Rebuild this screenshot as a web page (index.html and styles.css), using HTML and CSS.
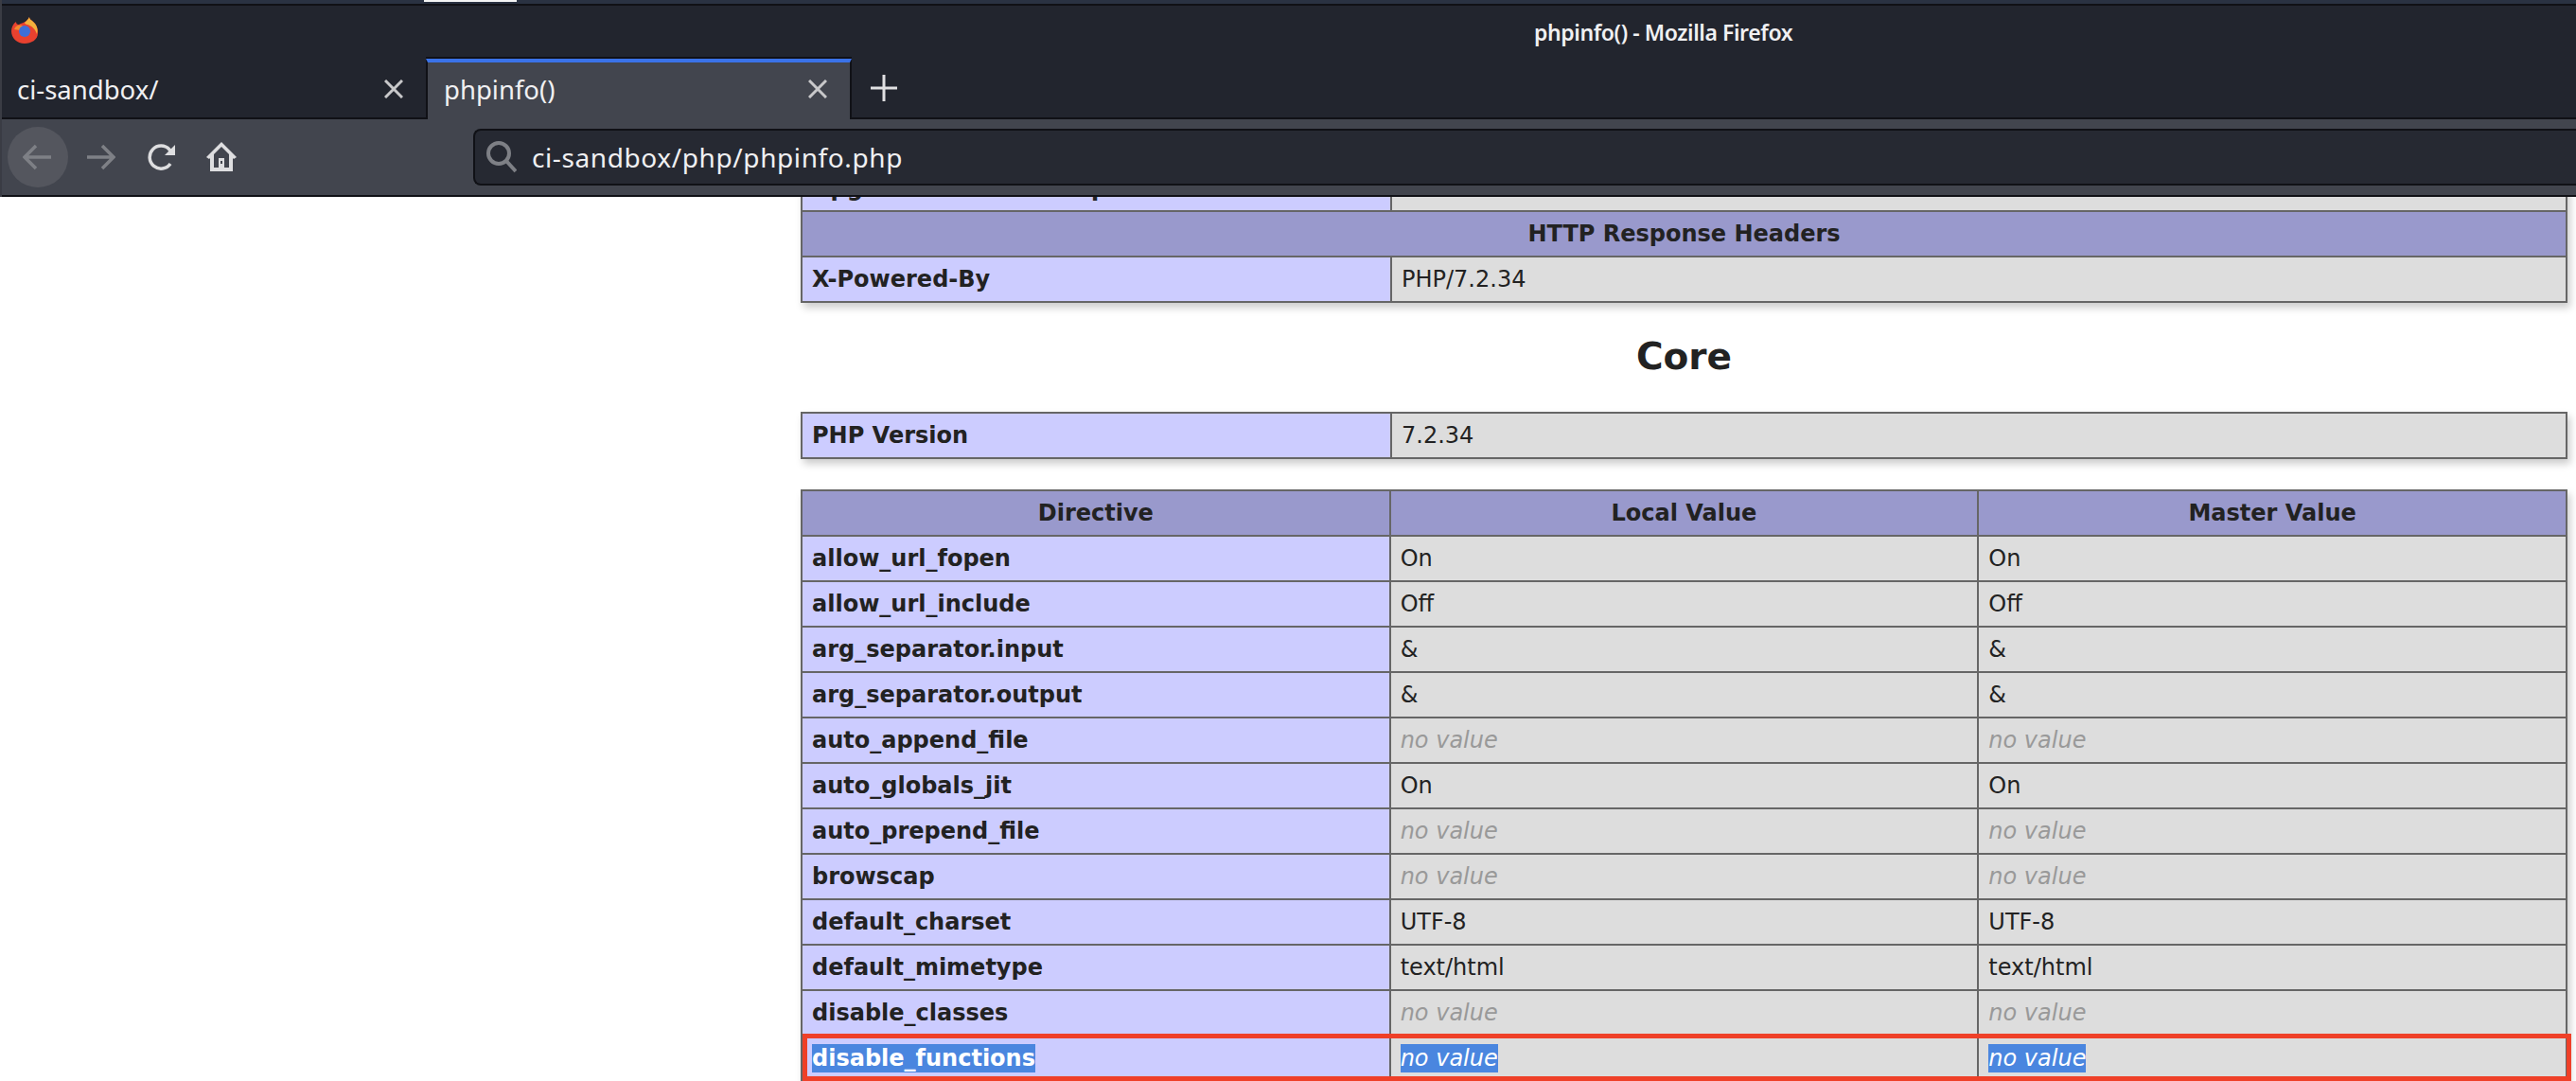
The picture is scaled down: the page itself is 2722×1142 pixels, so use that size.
FILE: index.html
```html
<!DOCTYPE html>
<html>

<head>
    <meta charset="utf-8">
    <title>phpinfo() - Mozilla Firefox</title>
    <link rel="stylesheet" href="styles.css">
</head>

<body>
    <header class="chrome">
        <div class="strip"><span class="strip-mark"></span></div>

        <div class="titlebar">
            <svg class="logo" viewBox="0 0 28 28">
                <path d="M19 0 C19 3 22 3 25 7 C28 11 28 15 28 17 C28 24 21 28 14 28 C6 28 0 22 0 15 C0 11 2 7 5 5 C5 7 6 8 8 8 C11 6 16 6 19 0 Z" fill="#e8412f"/>
                <path d="M19 0 C19 3 22 3 25 7 C28 11 28 15 27 18 C25 12 21 9 17 8 C11 6 16 6 19 0 Z" fill="#f2b13c"/>
                <path d="M3 13 C5 8 9 8 12 9 L9 14 Z" fill="#f28a2e"/>
                <circle cx="14" cy="15" r="6" fill="#3f6fd8"/>
            </svg>
            <span class="window-title">phpinfo() - Mozilla Firefox</span>
        </div>

        <div class="tabbar">
            <div class="tab">
                <span class="tab-label">ci-sandbox/</span>
                <svg class="tab-close" viewBox="0 0 20 20"><path d="M1 1 L19 19 M19 1 L1 19"/></svg>
            </div>
            <div class="tab tab-active">
                <span class="tab-label">phpinfo()</span>
                <svg class="tab-close" viewBox="0 0 20 20"><path d="M1 1 L19 19 M19 1 L1 19"/></svg>
            </div>
            <svg class="tab-new" viewBox="0 0 28 28"><path d="M14 0 V28 M0 14 H28"/></svg>
        </div>

        <div class="toolbar">
            <div class="nav-buttons">
                <span class="back-btn">
                    <svg class="nav-icon" viewBox="0 0 32 28"><path d="M30 14 H2 M14 2 L2 14 L14 26"/></svg>
                </span>
                <svg class="nav-icon forward" viewBox="0 0 32 28"><path d="M2 14 H30 M18 2 L30 14 L18 26"/></svg>
                <svg class="nav-icon reload" viewBox="0 0 30 28"><path d="M24 21 A12 12 0 1 1 23 6 L26 9"/><path class="solid" d="M29 1 V12 H18 Z"/></svg>
                <svg class="nav-icon home" viewBox="0 0 32 32"><path class="solid" fill-rule="evenodd" d="M16 0 L32 16 L29 18 L28 17 V31 H4 V17 L3 18 L0 16 Z M16 5 L8 13 V27 H13 V17 H19 V27 H24 V13 Z M15 20 V23 H17 V20 Z"/></svg>
            </div>
            <div class="urlbar">
                <svg class="search-icon" viewBox="0 0 32 34"><circle cx="13" cy="13" r="11"/><path d="M21 21 L31 32"/></svg>
                <span class="url">ci-sandbox/php/phpinfo.php</span>
            </div>
        </div>
    </header>

    <main class="page">
        <div class="center">
            <table class="info info-first">
                <colgroup><col class="col-e"><col></colgroup>
                <tr>
                    <td class="e">Upgrade-Insecure-Requests</td>
                    <td class="v">1</td>
                </tr>
                <tr class="h">
                    <th colspan="2">HTTP Response Headers</th>
                </tr>
                <tr>
                    <td class="e">X-Powered-By</td>
                    <td class="v">PHP/7.2.34</td>
                </tr>
            </table>

            <h2 class="module">Core</h2>

            <table class="info">
                <colgroup><col class="col-e"><col></colgroup>
                <tr>
                    <td class="e">PHP Version</td>
                    <td class="v">7.2.34</td>
                </tr>
            </table>

            <table class="info info-three">
                <tr class="h">
                    <th>Directive</th>
                    <th>Local Value</th>
                    <th>Master Value</th>
                </tr>
                <tr><td class="e">allow_url_fopen</td><td class="v">On</td><td class="v">On</td></tr>
                <tr><td class="e">allow_url_include</td><td class="v">Off</td><td class="v">Off</td></tr>
                <tr><td class="e">arg_separator.input</td><td class="v">&amp;</td><td class="v">&amp;</td></tr>
                <tr><td class="e">arg_separator.output</td><td class="v">&amp;</td><td class="v">&amp;</td></tr>
                <tr><td class="e">auto_append_file</td><td class="v"><i>no value</i></td><td class="v"><i>no value</i></td></tr>
                <tr><td class="e">auto_globals_jit</td><td class="v">On</td><td class="v">On</td></tr>
                <tr><td class="e">auto_prepend_file</td><td class="v"><i>no value</i></td><td class="v"><i>no value</i></td></tr>
                <tr><td class="e">browscap</td><td class="v"><i>no value</i></td><td class="v"><i>no value</i></td></tr>
                <tr><td class="e">default_charset</td><td class="v">UTF-8</td><td class="v">UTF-8</td></tr>
                <tr><td class="e">default_mimetype</td><td class="v">text/html</td><td class="v">text/html</td></tr>
                <tr><td class="e">disable_classes</td><td class="v"><i>no value</i></td><td class="v"><i>no value</i></td></tr>
                <tr class="marked">
                    <td class="e"><span class="selected">disable_functions</span></td>
                    <td class="v"><i class="selected">no value</i></td>
                    <td class="v"><i class="selected">no value</i></td>
                </tr>
            </table>
            <div class="red-box"></div>
        </div>
    </main>
</body>

</html>
```

FILE: styles.css
```css
* {
    box-sizing: border-box;
}

html,
body {
    margin: 0;
    height: 100%;
    overflow: hidden;
    background-color: #ffffff;
}

/* browser window */
.chrome {
    position: relative;
    z-index: 2;
    font-family: "Noto Sans", "Open Sans", sans-serif;
    color: #f0f0f2;
    border-left: 2px solid #3a3c44;
}

.strip {
    height: 6px;
    background-color: #2a3242;
    border-bottom: 2px solid #101116;
}

.strip-mark {
    display: block;
    width: 98px;
    height: 2px;
    margin-left: 446px;
    background-color: #f4f4f4;
}

.titlebar {
    display: flex;
    align-items: center;
    height: 56px;
    padding-left: 10px;
    background-color: #22252e;
}

.logo {
    width: 28px;
    height: 28px;
    margin-top: -4px;
}

.window-title {
    margin-left: 1581px;
    font-size: 23px;
    font-weight: 600;
    letter-spacing: -0.4px;
}

.tabbar {
    display: flex;
    align-items: center;
    height: 64px;
    background-color: #22252e;
    border-bottom: 2px solid #101116;
}

.tab {
    display: flex;
    align-items: center;
    justify-content: space-between;
    width: 448px;
    height: 62px;
    padding: 2px 24px 0 16px;
    font-size: 27.5px;
}

.tab-active {
    width: 450px;
    height: 64px;
    padding: 0 24px 4px 17px;
    margin-bottom: -2px;
    background-color: #42454e;
    border-top: 4px solid #3a72e8;
    border-left: 2px solid #101116;
    border-right: 2px solid #101116;
    box-shadow: 0 -2px 0 #101116;
}

.tab-close {
    width: 20px;
    height: 20px;
    fill: none;
    stroke: #c8c8ca;
    stroke-width: 3;
}

.tab-new {
    width: 28px;
    height: 28px;
    margin-left: 20px;
    fill: none;
    stroke: #e0e0e2;
    stroke-width: 3;
}

.toolbar {
    display: flex;
    align-items: center;
    height: 82px;
    padding-left: 6px;
    background-color: #42454e;
    border-bottom: 2px solid #101116;
}

.nav-buttons {
    display: flex;
    align-items: center;
    width: 492px;
}

.back-btn {
    display: flex;
    align-items: center;
    justify-content: center;
    width: 64px;
    height: 64px;
    border-radius: 50%;
    background-color: #54565e;
}

.nav-icon {
    width: 32px;
    height: 28px;
    fill: none;
    stroke: #7e8086;
    stroke-width: 3.5;
}

.forward {
    margin-left: 18px;
}

.reload {
    width: 30px;
    margin-left: 34px;
    stroke: #dedee0;
}

.home {
    height: 32px;
    margin-left: 32px;
    stroke: none;
}

.solid {
    fill: #dedee0;
    stroke: none;
}

.urlbar {
    flex: 1;
    display: flex;
    align-items: center;
    height: 60px;
    background-color: #262932;
    border: 2px solid #101116;
    border-right: 0;
    border-radius: 8px 0 0 8px;
}

.search-icon {
    width: 32px;
    height: 34px;
    margin-left: 12px;
    fill: none;
    stroke: #7e8086;
    stroke-width: 4;
}

.url {
    margin-left: 16px;
    font-size: 28px;
    letter-spacing: 0.6px;
}

/* phpinfo content */
.page {
    font-family: "DejaVu Sans", sans-serif;
    font-size: 24px;
    color: #222222;
}

.center {
    position: relative;
    width: 1867px;
    margin-left: 846px;
}

.info {
    table-layout: fixed;
    width: 100%;
    border-collapse: collapse;
    box-shadow: 3px 5px 8px #cccccc;
    margin-bottom: 32px;
}

.col-e {
    width: 623px;
}

.info-first {
    margin-top: -34px;
}

.info td,
.info th {
    height: 48px;
    padding: 0 10px;
    border: 2px solid #666666;
    text-align: left;
    font-weight: 400;
    white-space: nowrap;
}

.info .e {
    font-weight: 700;
    background-color: #ccccff;
}

.v {
    background-color: #dddddd;
}

.v i {
    color: #999999;
}

.info .h th {
    text-align: center;
    font-weight: 700;
    background-color: #9999cc;
}

.module {
    margin: 0;
    height: 83px;
    font-size: 39px;
    line-height: 50px;
    font-weight: 700;
    text-align: center;
}

.selected,
.v i.selected {
    padding: 1px 0;
    color: #ffffff;
    background-color: #4a86df;
}

.red-box {
    position: absolute;
    left: 2px;
    right: -4px;
    top: 918px;
    height: 50px;
    border: 5px solid #ef4028;
}
```
